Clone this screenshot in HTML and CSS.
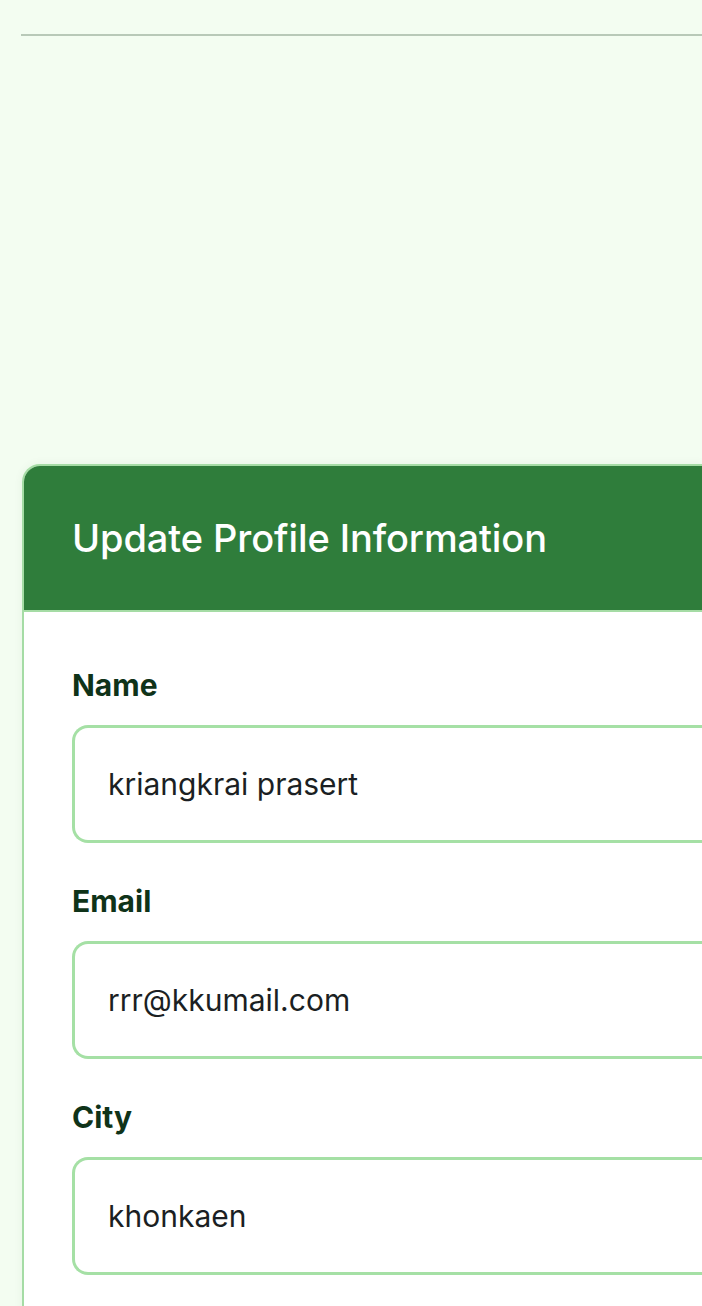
FILE: index.html
```html
<!DOCTYPE html>
<html lang="en">
<head>
<meta charset="utf-8">
<title>Update Profile</title>
<link rel="stylesheet" href="styles.css">
</head>
<body>
<hr class="rule">
<section class="card">
  <header class="card-header">
    <h2 class="card-title">Update Profile Information</h2>
  </header>
  <form class="card-body">
    <div class="field">
      <label class="field-label" for="name">Name</label>
      <input class="field-input" id="name" type="text" value="kriangkrai prasert">
    </div>
    <div class="field">
      <label class="field-label" for="email">Email</label>
      <input class="field-input" id="email" type="email" value="rrr@kkumail.com">
    </div>
    <div class="field">
      <label class="field-label" for="city">City</label>
      <input class="field-input" id="city" type="text" value="khonkaen">
    </div>
  </form>
</section>
</body>
</html>
```
FILE: styles.css
```css
html, body {
  margin: 0;
  padding: 0;
}
body {
  background: #f3fdf1;
  font-family: Inter, "Noto Sans", "Liberation Sans", sans-serif;
  overflow: hidden;
  width: 702px;
  height: 1306px;
}
.rule {
  border: 0;
  height: 2px;
  background: #b8c9b8;
  margin: 34px 0 0 21px;
  width: 681px;
}
.card {
  margin: 428px 0 0 22px;
  width: 680px;
  background: #ffffff;
  border: 2px solid #a5dca5;
  border-right: 0;
  border-radius: 18px 0 0 18px;
  overflow: hidden;
  box-shadow: 0 0 10px rgba(40, 90, 40, 0.06);
}
.card-header {
  background: #2f7d3b;
  height: 144px;
  border-bottom: 2px solid #a5dca5;
  display: flex;
  align-items: center;
  padding-left: 48px;
}
.card-title {
  margin: 0;
  color: #ffffff;
  font-size: 38px;
  font-weight: 500;
  line-height: 46px;
  letter-spacing: -0.1px;
}
.card-body {
  padding: 55px 0 60px 48px;
  display: flex;
  flex-direction: column;
  gap: 40px;
}
.field {
  display: flex;
  flex-direction: column;
}
.field-label {
  font-size: 30px;
  line-height: 36px;
  font-weight: 700;
  color: #0f3319;
  margin-bottom: 22px;
}
.field-input {
  box-sizing: border-box;
  height: 118px;
  width: 632px;
  border: 3px solid #a5e0a5;
  border-right: 0;
  border-radius: 16px 0 0 16px;
  padding: 0 0 0 33px;
  font-family: inherit;
  font-size: 30px;
  color: #1b1f23;
  background: #ffffff;
  outline: none;
}
```
